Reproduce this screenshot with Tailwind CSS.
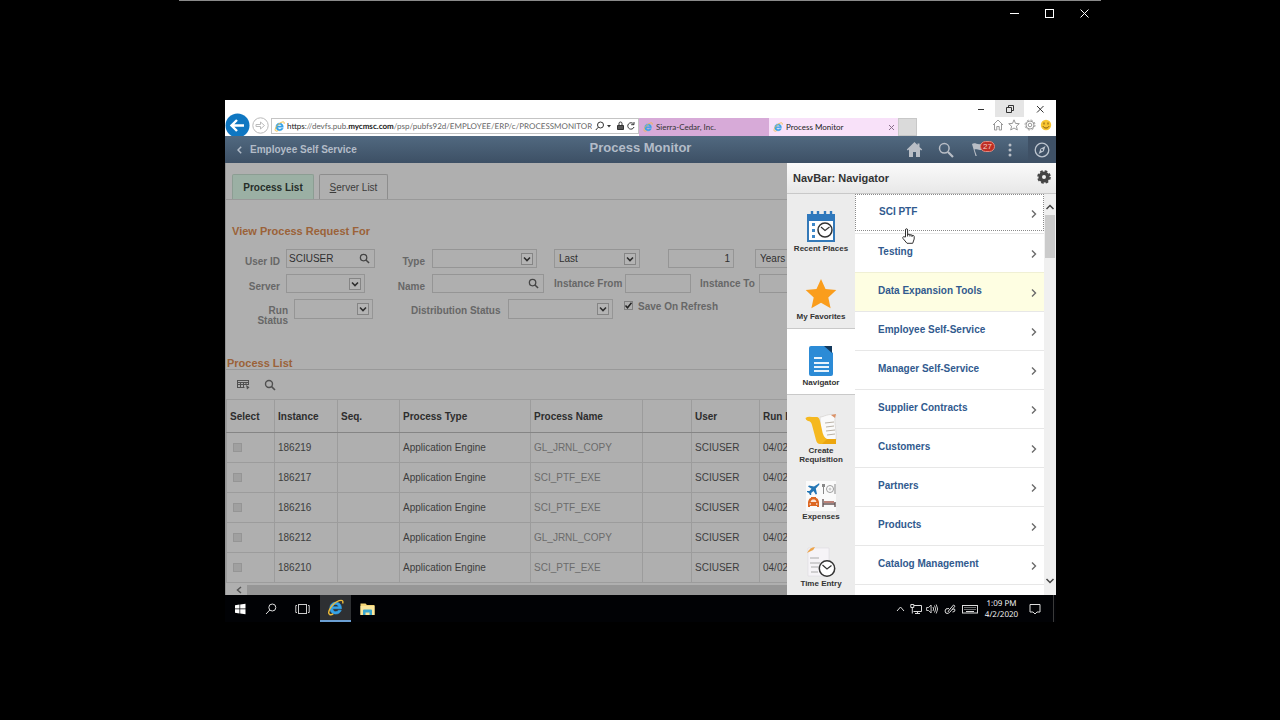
<!DOCTYPE html>
<html lang="en">
<head>
<meta charset="utf-8">
<title>Process Monitor</title>
<script src="https://cdn.jsdelivr.net/npm/@tailwindcss/browser@4"></script>
</head>
<body class="min-h-screen bg-black px-[179px] font-['Liberation_Sans',sans-serif] text-[10px] leading-[12px]">
<svg class="hidden">
  <symbol id="ie" viewBox="0 0 16 16"><path d="M13.6 9.2H5.4c.1 1.700 1.300 2.700 2.900 2.700 1.100 0 2-.5 2.400-1.300h2.700c-.7 2.200-2.700 3.500-5.200 3.500C5 14.100 2.700 11.900 2.700 8.600S5 3 8.200 3c3.400 0 5.500 2.400 5.400 6.200ZM5.500 7.400h5.300C10.700 6 9.700 5.100 8.200 5.100S5.700 6 5.500 7.400Z" fill="#35a3e8" stroke="#35a3e8" stroke-width=".6"/><path d="M2.500 14.600C-.5 12.500 5 4 11.500 1.600c3-1 4 .2 3.200 2.600M2.500 14.600c1 .4 2.300 0 3.400-.6" fill="none" stroke="#eebc3a" stroke-width="1.300"/></symbol>
  <symbol id="down" viewBox="0 0 12 12"><rect x=".5" y=".5" width="11" height="11" fill="#b4b4b4" stroke="#858585"/><path d="m3 4.500 3 3 3-3" fill="none" stroke="#2e2e2e" stroke-width="1.600"/></symbol>
  <symbol id="mag" viewBox="0 0 12 12"><circle cx="5" cy="5" r="3.500" fill="none" stroke="currentColor" stroke-width="1.400"/><path d="m7.600 7.600 3.400 3.400" stroke="currentColor" stroke-width="1.600"/></symbol>
  <symbol id="next" viewBox="0 0 6 10"><path d="m1 1.500 3.500 3.500L1 8.500" fill="none" stroke="#6a6a6a" stroke-width="1.400"/></symbol>
</svg>

<div class="min-h-screen border-t border-[#8a8a8a]">
  <div class="flex h-[99px] justify-end pt-[6px] pr-[10px]">
    <div class="flex h-[12px] gap-[22px] text-white">
      <button aria-label="Minimize"><svg class="size-[13px]" viewBox="0 0 13 13"><path d="M2 6.500h9" stroke="currentColor"/></svg></button>
      <button aria-label="Maximize"><svg class="size-[13px]" viewBox="0 0 13 13"><rect x="2.500" y="2.500" width="8" height="8" fill="none" stroke="currentColor"/></svg></button>
      <button aria-label="Close"><svg class="size-[13px]" viewBox="0 0 13 13"><path d="m2.500 2.500 8 8m0-8-8 8" stroke="currentColor"/></svg></button>
    </div>
  </div>

  <div class="mr-[45px] ml-[46px]">
    <!-- Browser chrome -->
    <div class="flex h-[36px] flex-col overflow-hidden bg-white font-[Lato,sans-serif] [text-rendering:geometricPrecision]">
      <div class="flex h-[17px] shrink-0 justify-end text-[#333]">
        <button class="flex w-[29px] items-center justify-center" aria-label="Minimize session"><svg class="size-[10px]" viewBox="0 0 10 10"><path d="M2 5.500h6" stroke="currentColor"/></svg></button>
        <button class="flex w-[29px] items-center justify-center bg-[#e5e5e5]" aria-label="Restore session"><svg class="size-[10px]" viewBox="0 0 10 10"><path d="M1.500 3.500h5v5h-5zM3.500 3V1.500h5v5H7" fill="none" stroke="currentColor"/></svg></button>
        <button class="flex w-[32px] items-center justify-center" aria-label="Close session"><svg class="size-[10px]" viewBox="0 0 10 10"><path d="m2 2 6.500 6.500m0-6.500L2 8.500" stroke="currentColor"/></svg></button>
      </div>
      <div class="flex h-[19px] items-start text-[8px]">
        <button class="-mt-[4px] shrink-0" aria-label="Back"><svg class="size-[25px]" viewBox="0 0 25 25"><circle cx="12.500" cy="12.500" r="12" fill="#0f77c2"/><path d="M19 12.500H7m5-5.500-5.500 5.500L12 18" fill="none" stroke="#fff" stroke-width="2.400"/></svg></button>
        <button class="ml-[2px] shrink-0" aria-label="Forward"><svg class="size-[17px]" viewBox="0 0 17 17"><circle cx="8.500" cy="8.500" r="7.700" fill="#fff" stroke="#b9b9b9"/><path d="M4 7.500h4.500V5l4 3.500-4 3.500V9.500H4z" fill="none" stroke="#bbb"/></svg></button>
        <div class="mt-[1px] ml-[2px] flex h-[16px] min-w-0 flex-1 items-center border border-[#c4c4c4] pl-[2px] text-[#666]">
          <svg class="mr-[2px] size-[11px] shrink-0"><use href="#ie"/></svg>
          <div role="textbox" contenteditable="true" aria-label="Address" class="min-w-0 flex-1 overflow-hidden whitespace-nowrap"><span class="text-[#222]">https</span>://devfs.pub.<span class="font-bold text-[#222]">mycmsc.com</span>/psp/pubfs92d/EMPLOYEE/ERP/c/PROCESSMONITOR.PR</div>
          <svg class="ml-[3px] h-[12px] w-[43px] shrink-0 text-[#333]" viewBox="0 0 43 12" fill="none" stroke="currentColor"><circle cx="5.500" cy="5" r="3"/><path d="M3.300 7.200.8 10"/><path d="M12 5h4l-2 2.500z" fill="currentColor" stroke="none"/><path d="M22.500 5.500h6v4h-6z" fill="#555"/><path d="M24 5V3.500a1.500 1.500 0 0 1 3 0V5M38.500 4A3.200 3.200 0 1 0 39 7M39 2v2.700h-2.800"/></svg>
        </div>
        <button class="mt-[1px] flex h-[18px] w-[130px] shrink-0 items-center bg-[#d7aad8] pl-[4px] text-[#333]"><svg class="mr-[3px] size-[10px]"><use href="#ie"/></svg>Sierra-Cedar, Inc.</button>
        <div class="mt-[1px] flex h-[18px] w-[129px] shrink-0 items-center bg-[#f8e1f9] pr-[3px] pl-[4px] text-[#222]"><button class="flex flex-1 items-center"><svg class="mr-[3px] size-[10px]"><use href="#ie"/></svg>Process Monitor</button><button aria-label="Close tab"><svg class="size-[7px]" viewBox="0 0 7 7"><path d="m1 1 5 5m0-5L1 6" stroke="#886f8a"/></svg></button></div>
        <button aria-label="New tab" class="mt-[1px] h-[18px] w-[19px] shrink-0 border border-[#c8c8c8] bg-[#dadada]"></button>
        <div class="mt-[2px] mr-[4px] ml-[75px] flex shrink-0 gap-[4px] text-[#999]">
          <button aria-label="Home"><svg class="size-[12px]" viewBox="0 0 12 12" fill="none" stroke="currentColor"><path d="m1 6 5-5 5 5M2.500 5v6h2.300V7.500h2.400V11h2.300V5"/></svg></button>
          <button aria-label="Favorites"><svg class="size-[12px]" viewBox="0 0 12 12" fill="none" stroke="currentColor"><path d="m6 .8 1.500 3.600 3.800.3-2.900 2.500.9 3.800L6 9l-3.300 2 .9-3.800L.7 4.700l3.800-.3z"/></svg></button>
          <button aria-label="Tools"><svg class="size-[12px]" viewBox="0 0 12 12" fill="none" stroke="currentColor"><circle cx="6" cy="6" r="1.800"/><circle cx="6" cy="6" r="4"/><circle cx="6" cy="6" r="5" stroke-dasharray="2 1.930"/></svg></button>
          <button aria-label="Feedback"><svg class="size-[12px]" viewBox="0 0 12 12"><circle cx="6" cy="6" r="5.200" fill="#f8c633"/><path d="M4 3.500v2m4-2v2M3 7.300c1.200 2.300 4.800 2.300 6 0" fill="none" stroke="#80540b"/></svg></button>
        </div>
      </div>
    </div>

    <!-- Application header -->
    <header class="grid h-[27px] grid-cols-[1fr_auto_1fr] items-center bg-linear-to-b from-[#516980] to-[#3d5065] font-bold text-[#b3bcc8]">
      <a href="#" class="flex items-center pl-[12px]"><svg class="mr-[8px] h-[8px] w-[5px]" viewBox="0 0 5 8"><path d="M4.200.8 1 4l3.200 3.200" fill="none" stroke="currentColor" stroke-width="1.500"/></svg>Employee Self Service</a>
      <h1 class="pb-[3px] text-[13px]">Process Monitor</h1>
      <div class="flex h-full items-center justify-end">
        <button aria-label="Home"><svg class="size-[17px]" viewBox="0 0 17 17"><path d="M8.500 1 .8 8.600l1 1L3 8.500V16h4v-5h3v5h4V8.500l1.200 1.100 1-1L13.500 6V2.500h-2V4z" fill="#b9bec6"/></svg></button>
        <button class="ml-[15px]" aria-label="Search"><svg class="size-[16px]" viewBox="0 0 16 16" fill="none" stroke="#b9bec6"><circle cx="6.300" cy="6.300" r="4.800" stroke-width="1.500"/><path d="m10 10 5 5" stroke-width="2.200"/></svg></button>
        <button class="relative ml-[17px] h-[17px] w-[24px]" aria-label="Notifications"><svg class="h-[17px] w-[12px]" viewBox="0 0 12 17"><path d="M1 3c3-2 6 1.500 10-.5v6c-3 1.500-5-1-7.500 0l2.300 6.500H4.500z" fill="#b9bec6"/></svg><span class="absolute top-0 right-0 h-[11px] w-[15px] rounded-full border border-[#e08a80] bg-[#bf2d23] text-center text-[8px] leading-[9px] font-normal text-[#f3cbc5]">27</span></button>
        <button class="ml-[13px]" aria-label="Actions"><svg class="h-[16px] w-[4px]" viewBox="0 0 4 16" fill="#b9bec6"><circle cx="2" cy="3" r="1.500"/><circle cx="2" cy="8" r="1.500"/><circle cx="2" cy="13" r="1.500"/></svg></button>
        <button class="ml-[16px] flex h-full w-[28px] items-center justify-center bg-[#3f5166]" aria-label="NavBar"><svg class="size-[16px]" viewBox="0 0 16 16"><circle cx="8" cy="8" r="6.800" fill="none" stroke="#bcc4ce" stroke-width="1.300"/><path d="M11.500 4 9.800 9.300 4.700 12l1.700-5.300z" fill="#bcc4ce"/><circle cx="8" cy="8" r="1" fill="#3b4c61"/></svg></button>
      </div>
    </header>

    <div class="flex">
      <main class="flex min-w-0 flex-1 flex-col overflow-hidden border-l border-[#959595] bg-[#afafaf] text-[#3b3b3b]">
        <div class="flex h-[37px] shrink-0 items-end gap-[5px] border-b border-[#999] pl-[6px]">
          <button class="h-[25px] w-[82px] rounded-t-[2px] border border-b-0 border-[#8c9d93] bg-[#9bb0a4] pt-[2px] font-bold text-[#262d29]">Process List</button>
          <button class="h-[25px] w-[69px] rounded-t-[2px] border border-b-0 border-[#8d8d8d] pt-[2px]"><u>S</u>erver List</button>
        </div>

        <form class="shrink-0 font-bold whitespace-nowrap text-[#676767]">
          <h2 class="mt-[25px] mb-[12px] pl-[6px] text-[11px] text-[#9b6238]">View Process Request For</h2>
          <div class="flex h-[19px]">
            <label for="user" class="w-[54px] shrink-0 pt-[7px] text-right">User ID</label>
            <div class="ml-[6px] flex w-[89px] shrink-0 items-center border border-[#959595] pr-[4px] pl-[2px]"><input id="user" value="SCIUSER" class="min-w-0 flex-1 font-normal text-[#303030]"><button type="button" aria-label="Look up User ID" class="text-[#454545]"><svg class="size-[11px]"><use href="#mag"/></svg></button></div>
            <label for="type" class="w-[50px] shrink-0 pt-[7px] text-right">Type</label>
            <div class="relative ml-[7px] w-[105px] shrink-0"><select id="type" class="size-full appearance-none border border-[#959595]"><option></option></select><svg class="pointer-events-none absolute top-[4px] right-[4px] size-[12px]"><use href="#down"/></svg></div>
            <div class="relative ml-[17px] w-[86px] shrink-0"><select aria-label="Period" class="size-full appearance-none border border-[#959595] pl-[4px] font-normal text-[#303030]"><option>Last</option></select><svg class="pointer-events-none absolute top-[4px] right-[4px] size-[12px]"><use href="#down"/></svg></div>
            <input aria-label="Count" value="1" class="ml-[28px] w-[66px] shrink-0 border border-[#959595] pr-[3px] text-right font-normal text-[#303030]">
            <select aria-label="Unit" class="ml-[21px] w-[70px] shrink-0 appearance-none border border-[#959595] pl-[4px] font-normal text-[#303030]"><option>Years</option></select>
          </div>
          <div class="mt-[6px] flex h-[19px]">
            <label for="server" class="w-[54px] shrink-0 pt-[7px] text-right">Server</label>
            <div class="relative ml-[6px] w-[79px] shrink-0"><select id="server" class="size-full appearance-none border border-[#959595]"><option></option></select><svg class="pointer-events-none absolute top-[4px] right-[4px] size-[12px]"><use href="#down"/></svg></div>
            <label for="name" class="w-[60px] shrink-0 pt-[7px] text-right">Name</label>
            <div class="ml-[7px] flex w-[112px] shrink-0 items-center border border-[#959595] pr-[4px]"><input id="name" class="min-w-0 flex-1"><button type="button" aria-label="Look up Name" class="text-[#454545]"><svg class="size-[11px]"><use href="#mag"/></svg></button></div>
            <label for="from" class="ml-[10px] w-[71px] shrink-0 pt-[4px]">Instance From</label>
            <input id="from" class="w-[66px] shrink-0 border border-[#959595]">
            <label for="to" class="ml-[9px] w-[59px] shrink-0 pt-[4px]">Instance To</label>
            <input id="to" class="w-[66px] shrink-0 border border-[#959595]">
          </div>
          <div class="mt-[6px] flex h-[20px]">
            <label for="run" class="w-[62px] shrink-0 pt-[7px] text-right leading-[10px]"><span class="block">Run</span><span class="block">Status</span></label>
            <div class="relative ml-[6px] w-[79px] shrink-0"><select id="run" class="size-full appearance-none border border-[#959595]"><option></option></select><svg class="pointer-events-none absolute top-[4px] right-[4px] size-[12px]"><use href="#down"/></svg></div>
            <label for="dist" class="ml-[38px] w-[97px] shrink-0 pt-[6px]">Distribution Status</label>
            <div class="relative w-[105px] shrink-0"><select id="dist" class="size-full appearance-none border border-[#959595]"><option></option></select><svg class="pointer-events-none absolute top-[4px] right-[4px] size-[12px]"><use href="#down"/></svg></div>
            <div class="relative mt-[2px] ml-[11px] size-[9px] shrink-0"><input id="save" type="checkbox" checked class="block size-[9px] appearance-none border border-[#808080]"><svg class="pointer-events-none absolute top-0 left-0 size-[9px]" viewBox="0 0 9 9"><path d="m1.500 4.500 2 2.300 4-5" fill="none" stroke="#222" stroke-width="1.500"/></svg></div>
            <label for="save" class="ml-[5px] pt-[2px]">Save On Refresh</label>
          </div>
        </form>

        <h2 class="mt-[37px] h-[13px] shrink-0 pt-[1px] pl-[1px] text-[11px] font-bold text-[#9b6238]">Process List</h2>
        <div class="flex h-[30px] shrink-0 items-center gap-[14px] border-t border-[#999] pl-[11px] text-[#505050]">
          <button aria-label="Grid actions"><svg class="h-[11px] w-[13px]" viewBox="0 0 13 11" fill="none" stroke="currentColor"><path d="M.5 1.500h11M.5 3.500h11M.5 5.500h11M.5 8.500h7M.5 1v8M3.500 3v6M6.500 3v6M9 3v3M11.500 1v5"/><path d="m9 6 3.500 2.200L10 10.500z" fill="currentColor" stroke="none"/></svg></button>
          <button aria-label="Find"><svg class="size-[12px]"><use href="#mag"/></svg></button>
        </div>
        <table class="w-[620px] shrink-0 table-fixed border-t border-[#858585] text-left text-[#3d3d3d] [&_td]:border [&_td]:border-[#9c9c9c] [&_td]:px-[3px] [&_th]:border [&_th]:border-[#9c9c9c] [&_th]:border-b-[#858585] [&_th]:px-[3px] [&_th]:pt-[2px] [&_th]:text-[#2d2d2d]">
          <colgroup><col class="w-[48px]"><col class="w-[63px]"><col class="w-[62px]"><col class="w-[131px]"><col class="w-[112px]"><col class="w-[49px]"><col class="w-[68px]"><col></colgroup>
          <thead><tr class="h-[33px]"><th>Select</th><th>Instance</th><th>Seq.</th><th>Process Type</th><th>Process Name</th><th></th><th>User</th><th>Run D</th></tr></thead>
          <tbody>
            <tr class="h-[30px]"><td><input type="checkbox" disabled aria-label="Select 186219" class="ml-[3px] block size-[9px] appearance-none border border-[#959595] bg-[#a0a0a0]"></td><td>186219</td><td></td><td>Application Engine</td><td class="text-[#6b6b6b]">GL_JRNL_COPY</td><td></td><td>SCIUSER</td><td>04/02</td></tr>
            <tr class="h-[30px]"><td><input type="checkbox" disabled aria-label="Select 186217" class="ml-[3px] block size-[9px] appearance-none border border-[#959595] bg-[#a0a0a0]"></td><td>186217</td><td></td><td>Application Engine</td><td class="text-[#6b6b6b]">SCI_PTF_EXE</td><td></td><td>SCIUSER</td><td>04/02</td></tr>
            <tr class="h-[30px]"><td><input type="checkbox" disabled aria-label="Select 186216" class="ml-[3px] block size-[9px] appearance-none border border-[#959595] bg-[#a0a0a0]"></td><td>186216</td><td></td><td>Application Engine</td><td class="text-[#6b6b6b]">SCI_PTF_EXE</td><td></td><td>SCIUSER</td><td>04/02</td></tr>
            <tr class="h-[30px]"><td><input type="checkbox" disabled aria-label="Select 186212" class="ml-[3px] block size-[9px] appearance-none border border-[#959595] bg-[#a0a0a0]"></td><td>186212</td><td></td><td>Application Engine</td><td class="text-[#6b6b6b]">GL_JRNL_COPY</td><td></td><td>SCIUSER</td><td>04/02</td></tr>
            <tr class="h-[30px]"><td><input type="checkbox" disabled aria-label="Select 186210" class="ml-[3px] block size-[9px] appearance-none border border-[#959595] bg-[#a0a0a0]"></td><td>186210</td><td></td><td>Application Engine</td><td class="text-[#6b6b6b]">SCI_PTF_EXE</td><td></td><td>SCIUSER</td><td>04/02</td></tr>
          </tbody>
        </table>
        <div class="mt-auto flex h-[10px] shrink-0"><button aria-label="Scroll left" class="flex w-[21px] items-center justify-center pl-[4px]"><svg class="h-[8px] w-[6px]" viewBox="0 0 6 8"><path d="M5 1 1.500 4 5 7" fill="none" stroke="#555" stroke-width="1.500"/></svg></button><div class="flex-1 bg-[#969696]"></div></div>
      </main>

      <!-- NavBar -->
      <aside class="w-[269px] shrink-0 bg-[#ececec]">
        <div class="flex h-[31px] items-center justify-between border-b border-[#c8c8c8] bg-linear-to-b from-[#fafafa] to-[#e8e8e8] pr-[5px] pl-[6px]">
          <h2 class="text-[11px] font-bold text-[#333]">NavBar: Navigator</h2>
          <button class="pb-[3px]" aria-label="NavBar settings"><svg class="size-[14px]" viewBox="0 0 14 14" fill="none" stroke="#444"><circle cx="7" cy="7" r="3.800" stroke-width="3.600"/><circle cx="7" cy="7" r="6" stroke-width="1.600" stroke-dasharray="2.700 2.012"/></svg></button>
        </div>
        <div class="flex h-[401px]">
          <nav class="flex w-[68px] flex-col text-center text-[8px] leading-[9px] font-bold text-[#333]">
            <a href="#" class="flex h-[67px] flex-col items-center pt-[16px]"><svg class="mb-[2px] size-[32px] shrink-0" viewBox="0 0 32 32"><rect x="3" y="5" width="26" height="26" fill="#fff" stroke="#3479b8" stroke-width="2"/><path d="M2 4h28v7H2z" fill="#2f78bc"/><path d="M7 1v6m6-6v6m7-6v6m6-6v6" stroke="#2f78bc" stroke-width="2.400"/><path d="M7 13h3v3H7zm0 6h3v3H7zm0 6h3v3H7z" fill="#3d87c8"/><circle cx="20" cy="20" r="7" fill="#fff" stroke="#333" stroke-width="1.500"/><path d="m16 17 4 3.500 4.500-3.500" fill="none" stroke="#333" stroke-width="1.200"/></svg>Recent Places</a>
            <a href="#" class="flex h-[67px] flex-col items-center pt-[17px]"><svg class="mb-[2px] size-[32px] shrink-0" viewBox="0 0 32 32"><path d="m16 1 4.500 10 10.800 1-8 7.500 2.300 10.800L16 24.700l-9.600 5.600L8.700 19.500.7 12l10.800-1z" fill="#fa9d1c"/></svg>My Favorites</a>
            <a href="#" class="flex h-[67px] flex-col items-center border-y border-[#c9c9c9] bg-white pt-[16px]"><svg class="mb-[1px] size-[32px] shrink-0" viewBox="0 0 32 32"><path d="M4 3q0-2 2-2h14l8 7v21q0 2-2 2H6q-2 0-2-2z" fill="#2c8bd6"/><path d="M19 1h8v7z" fill="#12385b"/><path d="M9 13h8m-8 5h15M9 22h15M9 26h15" stroke="#e8f3fc" stroke-width="2"/></svg>Navigator</a>
            <a href="#" class="flex h-[67px] flex-col items-center pt-[18px]"><svg class="mb-[1px] size-[32px] shrink-0" viewBox="0 0 32 32"><path d="M15 4c4 0 8-4 16-2-3 4 1 15 0 25H16z" fill="#fafafa" stroke="#d6d3d0" stroke-width=".7"/><path d="m20 10 9-1m-8 5 8-1m-8 5 9-1m-8 5 8-1" stroke="#b9b1a5"/><path d="M.5 5Q3 3 7 4h5q2 0 3 4l2 9q1 7 5 9h9v5H15q-3 0-4-4L7 12Q6 8 3 8 .5 7 .5 5Z" fill="#f5b81f"/><path d="M22 26h9v5H17z" fill="#eca60f"/><path d="m26 2 5-1-1 4z" fill="#dc9267"/></svg>Create<br>Requisition</a>
            <a href="#" class="flex h-[67px] flex-col items-center pt-[18px]"><svg class="size-[32px] shrink-0" viewBox="0 0 32 32"><path fill="#fafafa" d="M1 1h30v30H1z"/><path d="M13 4c1-1 2 0 1 1l-3.200 3.500L12 14l-1.300.6L8.500 11l-2.300 2v2L5 15l-1-2-2-1v-1h2.500l2-2.300L3 6.500 4 5.500l5 .9z" fill="#2476b5"/><path d="M18.500 4v10m-1-10v3m2-3v3m10.500-3v10" stroke="#888"/><circle cx="25" cy="9" r="3.500" fill="#fff" stroke="#999"/><circle cx="25" cy="9" r="1.500" fill="#ccc"/><path d="M3 22q1-4 3-4V17h5v1q2 0 3 4v5h-2v-1H5v1H3z" fill="#dd6722"/><path d="M5.500 22q.7-2.500 2-2.500h2q1.300 0 2 2.500z" fill="#fbe4d6"/><circle cx="5.200" cy="24" r=".8" fill="#fff"/><circle cx="11.800" cy="24" r=".8" fill="#fff"/><path d="M18 19v8m12-5v5m-12-3h12" stroke="#655" stroke-width="1.400"/><path d="M19 22h10" stroke="#bb8278" stroke-width="2"/></svg>Expenses</a>
            <a href="#" class="flex h-[66px] flex-col items-center pt-[17px]"><svg class="mb-[1px] size-[32px] shrink-0" viewBox="0 0 32 32"><path d="M3 2h21v28H3z" fill="#f6f4f7" stroke="#dfdce2" stroke-width=".7"/><path d="M2 7q3-6 8-6-1 3-4 4z" fill="#eda54b"/><path d="M5 12h9m-9 5h10M6 21h8m-8 5h7" stroke="#aaa"/><circle cx="22" cy="22.500" r="7.700" fill="#fff" stroke="#333" stroke-width="1.500"/><path d="m17.500 19 4.500 4 4.500-3.500" fill="none" stroke="#333" stroke-width="1.200"/></svg>Time Entry</a>
          </nav>
          <ul class="min-w-0 flex-1 overflow-hidden bg-white font-bold text-[#315a8e] [&_a]:pb-[2px] [&_a>svg]:mt-[4px]">
            <li class="relative h-[39px]"><a href="#" class="flex h-[37px] items-center justify-between border border-dotted border-[#8a8a8a] pr-[6px] pl-[23px]">SCI PTF<svg class="h-[10px] w-[6px]"><use href="#next"/></svg></a>
              <svg class="pointer-events-none absolute top-[34px] left-[47px] h-[16px] w-[13px]" viewBox="0 0 13 16"><path d="M3.500 9V2q0-1.300 1-1.300T5.600 2v4.500q2-.8 2.300.4 1.800-.5 2.100.5 2-.4 2.200 1V11l-1.500 4.300H5L1 10.500Q.3 9 1.500 8.700z" fill="#fff" stroke="#333"/><path d="M5.600 6v2.500m2.300-2v2m2.100-1.500v2" stroke="#333"/></svg></li>
            <li class="h-[39px] border-t border-[#e7e7e7]"><a href="#" class="flex h-full items-center justify-between pr-[7px] pl-[23px]">Testing<svg class="h-[10px] w-[6px]"><use href="#next"/></svg></a></li>
            <li class="h-[39px] border-t border-[#f0f0d4] bg-[#fefee2]"><a href="#" class="flex h-full items-center justify-between pr-[7px] pl-[23px]">Data Expansion Tools<svg class="h-[10px] w-[6px]"><use href="#next"/></svg></a></li>
            <li class="h-[39px] border-t border-[#e7e7e7]"><a href="#" class="flex h-full items-center justify-between pr-[7px] pl-[23px]">Employee Self-Service<svg class="h-[10px] w-[6px]"><use href="#next"/></svg></a></li>
            <li class="h-[39px] border-t border-[#e7e7e7]"><a href="#" class="flex h-full items-center justify-between pr-[7px] pl-[23px]">Manager Self-Service<svg class="h-[10px] w-[6px]"><use href="#next"/></svg></a></li>
            <li class="h-[39px] border-t border-[#e7e7e7]"><a href="#" class="flex h-full items-center justify-between pr-[7px] pl-[23px]">Supplier Contracts<svg class="h-[10px] w-[6px]"><use href="#next"/></svg></a></li>
            <li class="h-[39px] border-t border-[#e7e7e7]"><a href="#" class="flex h-full items-center justify-between pr-[7px] pl-[23px]">Customers<svg class="h-[10px] w-[6px]"><use href="#next"/></svg></a></li>
            <li class="h-[39px] border-t border-[#e7e7e7]"><a href="#" class="flex h-full items-center justify-between pr-[7px] pl-[23px]">Partners<svg class="h-[10px] w-[6px]"><use href="#next"/></svg></a></li>
            <li class="h-[39px] border-t border-[#e7e7e7]"><a href="#" class="flex h-full items-center justify-between pr-[7px] pl-[23px]">Products<svg class="h-[10px] w-[6px]"><use href="#next"/></svg></a></li>
            <li class="h-[40px] border-y border-[#e7e7e7]"><a href="#" class="flex h-full items-center justify-between pr-[7px] pl-[23px]">Catalog Management<svg class="h-[10px] w-[6px]"><use href="#next"/></svg></a></li>
          </ul>
          <div class="flex w-[12px] flex-col items-center bg-[#f0f0f0] pt-[10px] pb-[11px]">
            <svg class="h-[6px] w-[10px]" viewBox="0 0 10 6"><path d="m1.500 5 3.500-3.500L8.500 5" fill="none" stroke="#444" stroke-width="1.500"/></svg>
            <div class="mt-[5px] mb-auto h-[43px] w-[10px] bg-[#cbcbcb]"></div>
            <svg class="h-[6px] w-[10px]" viewBox="0 0 10 6"><path d="m1.500 1 3.500 3.500L8.500 1" fill="none" stroke="#444" stroke-width="1.500"/></svg>
          </div>
        </div>
      </aside>
    </div>

    <!-- Taskbar -->
    <footer class="flex h-[27px] items-center bg-[#010205] pl-[9px] font-['Open_Sans',sans-serif] text-white [text-rendering:geometricPrecision]">
      <button aria-label="Start"><svg class="size-[12px]" viewBox="0 0 12 12" fill="#fff"><path d="M1 2.300 5.500 1.600v4H1zM6.200 1.500 11.500.7v4.900H6.200zM1 6.300h4.500v4.100L1 9.700zm5.200 0h5.300v4.900l-5.300-.8z"/></svg></button>
      <button class="ml-[19px]" aria-label="Search"><svg class="size-[12px]" viewBox="0 0 12 12" fill="none" stroke="#ddd"><circle cx="7.300" cy="4.500" r="3.500"/><path d="M4.800 7 1 11"/></svg></button>
      <button class="ml-[18px]" aria-label="Task view"><svg class="h-[12px] w-[15px]" viewBox="0 0 15 12" fill="none" stroke="#ccc"><rect x="3.500" y="1.500" width="8" height="9"/><path d="M2 2.500H.8v7H2m11-7h1.200v7H13"/></svg></button>
      <button class="ml-[10px] flex h-full w-[31px] items-center justify-center border-b-2 border-[#6b9fd3] bg-[#2e3033]" aria-label="Internet Explorer"><svg class="size-[17px]"><use href="#ie"/></svg></button>
      <button class="ml-[9px]" aria-label="File Explorer"><svg class="h-[14px] w-[15px]" viewBox="0 0 15 14"><path d="M.5 1.500h5L7 3h7.500v10H.5z" fill="#f4d575"/><path d="M.5 4h14v9H.5z" fill="#fbe79c"/><path d="M3 13V8.500q0-1 1-1h7q1 0 1 1V13H9.500v-2.500h-4V13z" fill="#3ba7cf"/></svg></button>
      <div class="ml-auto flex h-full items-center text-[#ddd]">
        <svg class="h-[8px] w-[9px]" viewBox="0 0 9 8" fill="none" stroke="currentColor"><path d="m1 6 3.500-4L8 6"/></svg>
        <svg class="ml-[5px] size-[12px]" viewBox="0 0 12 12" fill="none" stroke="currentColor"><path d="M4 2.500h7.500v6H3.500M5 10.500h5M7.500 9v1.500M.8 1.500h3v3h-3zM2.300 4.500v6"/></svg>
        <svg class="ml-[4px] size-[12px]" viewBox="0 0 12 12" fill="none" stroke="currentColor"><path d="M.6 4.500h2l2.500-2.500v8L2.600 7.500h-2zM7 4q1.300 2 0 4m1.500-5.500q2.500 3.500 0 7m1.700-8q3 4.500 0 9" stroke-width=".9"/></svg>
        <svg class="ml-[6px] size-[12px]" viewBox="0 0 12 12" fill="none" stroke="currentColor"><path d="M4 8.500 9.500 2l1.500 1.200L5.500 9.500zM5 5.500q-4-.5-4 2.500t3.500 2.500M8 6.500q3-1.500 3 .5T8.500 9"/></svg>
        <svg class="ml-[6px] h-[10px] w-[16px]" viewBox="0 0 16 10" fill="none" stroke="currentColor"><rect x=".5" y="1.500" width="15" height="7.500"/><path d="M2.500 3.500h11m-11 2h11" stroke-dasharray="1 1"/><path d="M4 7.500h8"/></svg>
        <div class="w-[47px] text-center text-[8px] leading-[11px] text-white">1:09 PM<br>4/2/2020</div>
        <svg class="ml-[4px] size-[12px]" viewBox="0 0 12 12" fill="none" stroke="currentColor"><path d="M1 1.500h10v7.500H8L6 11 4 9H1z"/></svg>
        <div class="mr-[2px] ml-[12px] h-full w-px bg-[#3a3a3a]"></div>
      </div>
    </footer>
  </div>
</div>
</body>
</html>
